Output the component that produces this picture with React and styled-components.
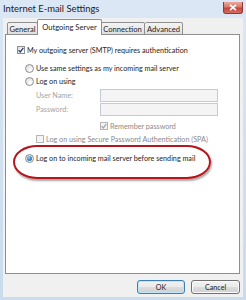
import React from "react";
import styled, { createGlobalStyle } from "styled-components";

const GlobalStyle = createGlobalStyle`
  html, body {
    margin: 0;
    padding: 0;
    background: #cfdff0;
  }
  body {
    font-family: Lato, "Open Sans", sans-serif;
    font-size: 7.2px;
    color: #1e1e1e;
  }
`;

const Window = styled.div`
  width: 246px;
  height: 300px;
  display: flex;
  flex-direction: column;
  background: linear-gradient(180deg, #dbe7f4 0%, #d3e2f2 40%, #cadbee 100%);
  box-sizing: border-box;
`;

const TitleBar = styled.div`
  height: 18px;
  display: flex;
  align-items: center;
  justify-content: space-between;
  padding: 0 3px 0 3px;
  box-sizing: border-box;
`;

const Title = styled.span`
  font-size: 9.4px;
  color: #1b1b1b;
  margin-top: -2px;
`;

const CloseButton = styled.div`
  width: 20px;
  height: 12px;
  margin-top: -3px;
  border: 1px solid #8d3a32;
  border-top: none;
  border-radius: 0 0 3px 3px;
  background: linear-gradient(180deg, #e9a99b 0%, #d8796a 45%, #c4433a 55%, #d5705e 100%);
  display: flex;
  align-items: center;
  justify-content: center;
  box-sizing: border-box;
`;

const Client = styled.div`
  flex: 1;
  margin: 0 3px 3px 3px;
  background: #f0f0f0;
  padding: 1px 3px 0 2px;
  display: flex;
  flex-direction: column;
`;

const TabRow = styled.div`
  display: flex;
  align-items: flex-end;
  height: 16px;
  padding-left: 2px;
  margin-bottom: -1px;
  position: relative;
  z-index: 1;
`;

const Tab = styled.div`
  width: ${(p) => p.$w}px;
  height: ${(p) => (p.$active ? 16 : 13)}px;
  margin: 0 ${(p) => (p.$active ? -1 : 0)}px;
  box-sizing: border-box;
  border: 1px solid #8e8f8f;
  border-bottom: ${(p) => (p.$active ? "none" : "1px solid #8e8f8f")};
  border-left: ${(p) => (p.$first || p.$active ? "1px solid #8e8f8f" : "none")};
  border-radius: 2px 2px 0 0;
  background: ${(p) =>
    p.$active ? "#ffffff" : "linear-gradient(180deg, #f3f3f3 0%, #ebebeb 50%, #dedede 100%)"};
  display: flex;
  align-items: center;
  justify-content: center;
  padding-bottom: ${(p) => (p.$active ? 2 : 0)}px;
  position: relative;
  z-index: ${(p) => (p.$active ? 2 : 1)};
  font-size: 7.6px;
  color: #1e1e1e;
`;

const Panel = styled.div`
  height: 240px;
  box-sizing: border-box;
  border: 1px solid #8e8f8f;
  background: #ffffff;
  padding: 9px 0 0 11px;
  display: flex;
  flex-direction: column;
  position: relative;
`;

const Row = styled.div`
  display: flex;
  align-items: center;
  height: ${(p) => p.$h || 12}px;
  margin-top: ${(p) => p.$mt || 0}px;
  padding-left: ${(p) => p.$indent || 0}px;
  color: ${(p) => (p.$disabled ? "#8a8a8a" : "#1e1e1e")};
`;

const Label = styled.span`
  width: ${(p) => p.$w}px;
  color: #a3a3a3;
`;

const Field = styled.div`
  width: 118px;
  height: 13px;
  box-sizing: border-box;
  border: 1px solid #c3cbd4;
  background: #f4f4f4;
`;

const Box = styled.span`
  width: 8px;
  height: 8px;
  box-sizing: border-box;
  border: 1px solid ${(p) => (p.$disabled ? "#b5b5b5" : "#8e8f8f")};
  background: ${(p) =>
    p.$disabled ? "#f4f4f4" : "linear-gradient(135deg, #dcdcdc 0%, #f6f6f6 60%, #ffffff 100%)"};
  margin-right: 2px;
  display: flex;
  align-items: center;
  justify-content: center;
  flex-shrink: 0;
`;

const Radio = styled.span`
  width: 9px;
  height: 9px;
  box-sizing: border-box;
  border-radius: 50%;
  border: 1px solid #8e8f8f;
  background: radial-gradient(circle at 65% 70%, #ffffff 0%, #e9e9e9 55%, #cfcfcf 100%);
  margin-right: 2px;
  display: flex;
  align-items: center;
  justify-content: center;
  flex-shrink: 0;
`;

const Dot = styled.span`
  width: 5px;
  height: 5px;
  border-radius: 50%;
  background: radial-gradient(circle at 40% 35%, #9fd0f5 0%, #2b79c2 60%, #14548f 100%);
`;

const Highlight = styled.div`
  position: absolute;
  left: 7px;
  top: 110px;
  width: 198px;
  height: 34px;
  box-sizing: border-box;
  border: 2px solid #b8141c;
  border-radius: 24px / 17px;
  box-shadow: 1px 2px 2px rgba(0, 0, 0, 0.35);
  pointer-events: none;
`;

const Footer = styled.div`
  display: flex;
  justify-content: flex-end;
  gap: 6px;
  margin-top: 6px;
`;

const Button = styled.div`
  width: ${(p) => p.$w}px;
  height: 14px;
  box-sizing: border-box;
  border: 1px solid ${(p) => (p.$default ? "#3c7fb1" : "#707070")};
  border-radius: 3px;
  background: linear-gradient(180deg, #f2f2f2 0%, #ebebeb 48%, #dddddd 52%, #cfcfcf 100%);
  box-shadow: ${(p) => (p.$default ? "inset 0 0 0 1px #bfe6f8" : "inset 0 0 0 1px #fbfbfb")};
  display: flex;
  align-items: center;
  justify-content: center;
  color: #1e1e1e;
`;

const Check = ({ color = "#2a3d7a" }) => (
  <svg width="6" height="6" viewBox="0 0 6 6">
    <path d="M0.6 3.2 L2.3 4.9 L5.4 0.8" fill="none" stroke={color} strokeWidth="1.3" />
  </svg>
);

const CloseX = () => (
  <svg width="8" height="7" viewBox="0 0 8 7">
    <path d="M1 0.8 L7 6.2 M7 0.8 L1 6.2" stroke="#ffffff" strokeWidth="1.6" />
  </svg>
);

export default function App() {
  return (
    <>
      <GlobalStyle />
      <Window>
        <TitleBar>
          <Title>Internet E-mail Settings</Title>
          <CloseButton>
            <CloseX />
          </CloseButton>
        </TitleBar>
        <Client>
          <TabRow>
            <Tab $w={31} $first>General</Tab>
            <Tab $w={65} $active>Outgoing Server</Tab>
            <Tab $w={44}>Connection</Tab>
            <Tab $w={38}>Advanced</Tab>
          </TabRow>
          <Panel>
            <Row>
              <Box>
                <Check />
              </Box>
              My outgoing server (SMTP) requires authentication
            </Row>
            <Row $mt={6} $indent={8}>
              <Radio />
              Use same settings as my incoming mail server
            </Row>
            <Row $mt={1} $indent={8}>
              <Radio />
              Log on using
            </Row>
            <Row $mt={2} $h={13} $indent={19}>
              <Label $w={64}>User Name:</Label>
              <Field />
            </Row>
            <Row $mt={1} $h={13} $indent={19}>
              <Label $w={64}>Password:</Label>
              <Field />
            </Row>
            <Row $mt={4} $indent={83} $disabled>
              <Box $disabled>
                <Check color="#a9a9a9" />
              </Box>
              Remember password
            </Row>
            <Row $mt={1} $indent={19} $disabled>
              <Box $disabled />
              Log on using Secure Password Authentication (SPA)
            </Row>
            <Row $mt={7} $indent={8}>
              <Radio>
                <Dot />
              </Radio>
              Log on to incoming mail server before sending mail
            </Row>
            <Highlight />
          </Panel>
          <Footer>
            <Button $w={48} $default>OK</Button>
            <Button $w={49}>Cancel</Button>
          </Footer>
        </Client>
      </Window>
    </>
  );
}
